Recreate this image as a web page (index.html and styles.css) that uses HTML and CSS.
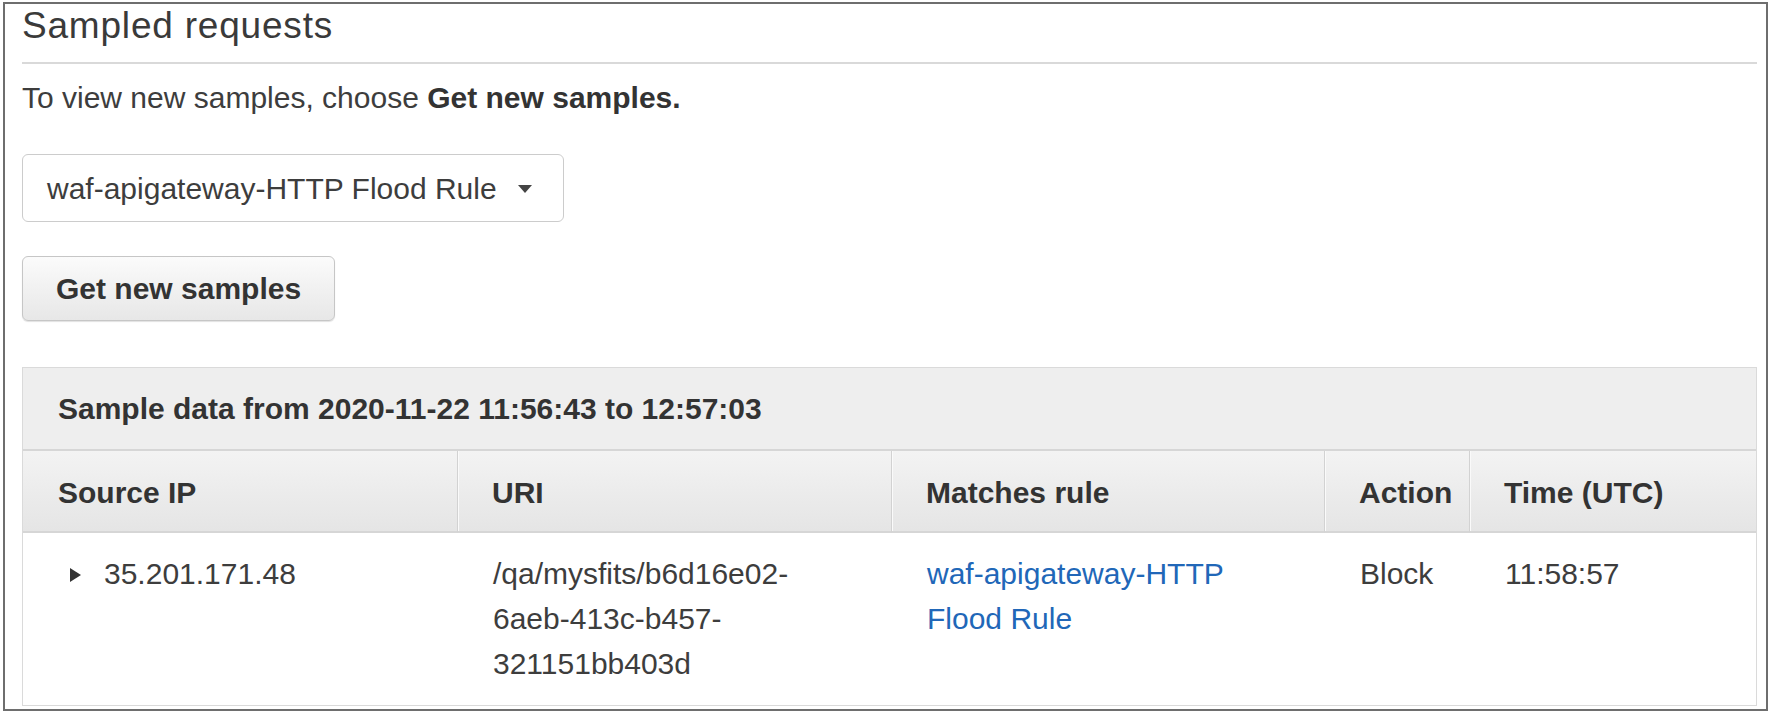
FILE: index.html
```html
<!DOCTYPE html>
<html lang="en">
<head>
<meta charset="utf-8">
<title>Sampled requests</title>
<link rel="stylesheet" href="styles.css">
</head>
<body>
<div class="frame">
  <h2 class="title">Sampled requests</h2>
  <p class="hint">To view new samples, choose <b>Get new samples.</b></p>
  <div class="select">
    <span class="select-text">waf-apigateway-HTTP Flood Rule</span>
    <span class="caret"></span>
  </div>
  <button class="btn" type="button">Get new samples</button>
  <div class="panel">
    <div class="caption">Sample data from 2020-11-22 11:56:43 to 12:57:03</div>
    <table class="samples">
      <colgroup>
        <col class="c-ip">
        <col class="c-uri">
        <col class="c-rule">
        <col class="c-action">
        <col class="c-time">
      </colgroup>
      <thead>
        <tr>
          <th class="first">Source IP</th>
          <th>URI</th>
          <th>Matches rule</th>
          <th>Action</th>
          <th>Time (UTC)</th>
        </tr>
      </thead>
      <tbody>
        <tr>
          <td class="first"><span class="expander"></span>35.201.171.48</td>
          <td>/qa/mysfits/b6d16e02-6aeb-413c-b457-321151bb403d</td>
          <td><a class="link" href="#">waf-apigateway-HTTP Flood Rule</a></td>
          <td>Block</td>
          <td>11:58:57</td>
        </tr>
      </tbody>
    </table>
  </div>
</div>
</body>
</html>
```

FILE: styles.css
```css
html, body {
  margin: 0;
  padding: 0;
  background: #ffffff;
}

body {
  font-family: "Liberation Sans", Arial, sans-serif;
  color: #333333;
}

.frame {
  box-sizing: border-box;
  margin: 2px 5px 2px 3px;
  height: 709px;
  border: 2px solid #6e6e6e;
  padding: 0 9px 0 17px;
  overflow: hidden;
}

.title {
  margin: 0;
  font-size: 37px;
  font-weight: normal;
  letter-spacing: 0.8px;
  line-height: 44px;
  color: #3a3a3a;
  padding-bottom: 14px;
  border-bottom: 2px solid #d9d9d9;
}

.hint {
  margin: 11px 0 0;
  font-size: 30px;
  line-height: 45px;
  color: #3d3d3d;
}

.hint b {
  color: #333333;
}

.select {
  box-sizing: border-box;
  margin-top: 34px;
  width: 542px;
  height: 68px;
  border: 1px solid #cccccc;
  border-radius: 6px;
  padding: 0 0 0 24px;
  display: flex;
  align-items: center;
  font-size: 30px;
  line-height: 45px;
  color: #3d3d3d;
}

.caret {
  width: 0;
  height: 0;
  margin-left: 21px;
  margin-top: 2px;
  border-left: 7px solid transparent;
  border-right: 7px solid transparent;
  border-top: 8px solid #444444;
}

.btn {
  display: block;
  box-sizing: border-box;
  margin-top: 34px;
  height: 65px;
  padding: 0 33px;
  border: 1px solid #c6c6c6;
  border-radius: 6px;
  background: linear-gradient(#fbfbfb, #e7e7e7);
  box-shadow: 0 1px 1px rgba(0, 0, 0, 0.12);
  font-family: "Liberation Sans", Arial, sans-serif;
  font-size: 30px;
  font-weight: bold;
  line-height: 45px;
  color: #333333;
}

.panel {
  margin-top: 46px;
  border: 1px solid #dadada;
}

.caption {
  box-sizing: border-box;
  height: 83px;
  padding: 0 0 0 35px;
  display: flex;
  align-items: center;
  background: #eeeeee;
  border-bottom: 2px solid #d6d6d6;
  font-size: 30px;
  font-weight: bold;
  color: #333333;
}

.samples {
  width: 100%;
  table-layout: fixed;
  border-collapse: separate;
  border-spacing: 0;
  font-size: 30px;
  line-height: 45px;
}

.c-ip { width: 434px; }
.c-uri { width: 434px; }
.c-rule { width: 433px; }
.c-action { width: 145px; }
.c-time { width: 287px; }

.samples th {
  text-align: left;
  font-weight: bold;
  padding: 19px 0 16px 34px;
  background: linear-gradient(#f3f3f3, #e5e5e5);
  border-bottom: 2px solid #d6d6d6;
  border-left: 1px solid #d2d2d2;
  box-shadow: inset 1px 0 0 #fafafa;
  white-space: nowrap;
  color: #333333;
}

.samples th.first {
  border-left: none;
  box-shadow: none;
  padding-left: 35px;
}

.samples td {
  vertical-align: top;
  padding: 18px 36px 19px 35px;
  border-left: 1px solid transparent;
  color: #3d3d3d;
}

.samples td.first {
  border-left: none;
  padding-left: 35px;
}

.expander {
  display: inline-block;
  width: 0;
  height: 0;
  margin: 0 23px 2px 12px;
  border-top: 7.5px solid transparent;
  border-bottom: 7.5px solid transparent;
  border-left: 11px solid #333333;
}

.link {
  color: #2167b8;
  text-decoration: none;
}
```
